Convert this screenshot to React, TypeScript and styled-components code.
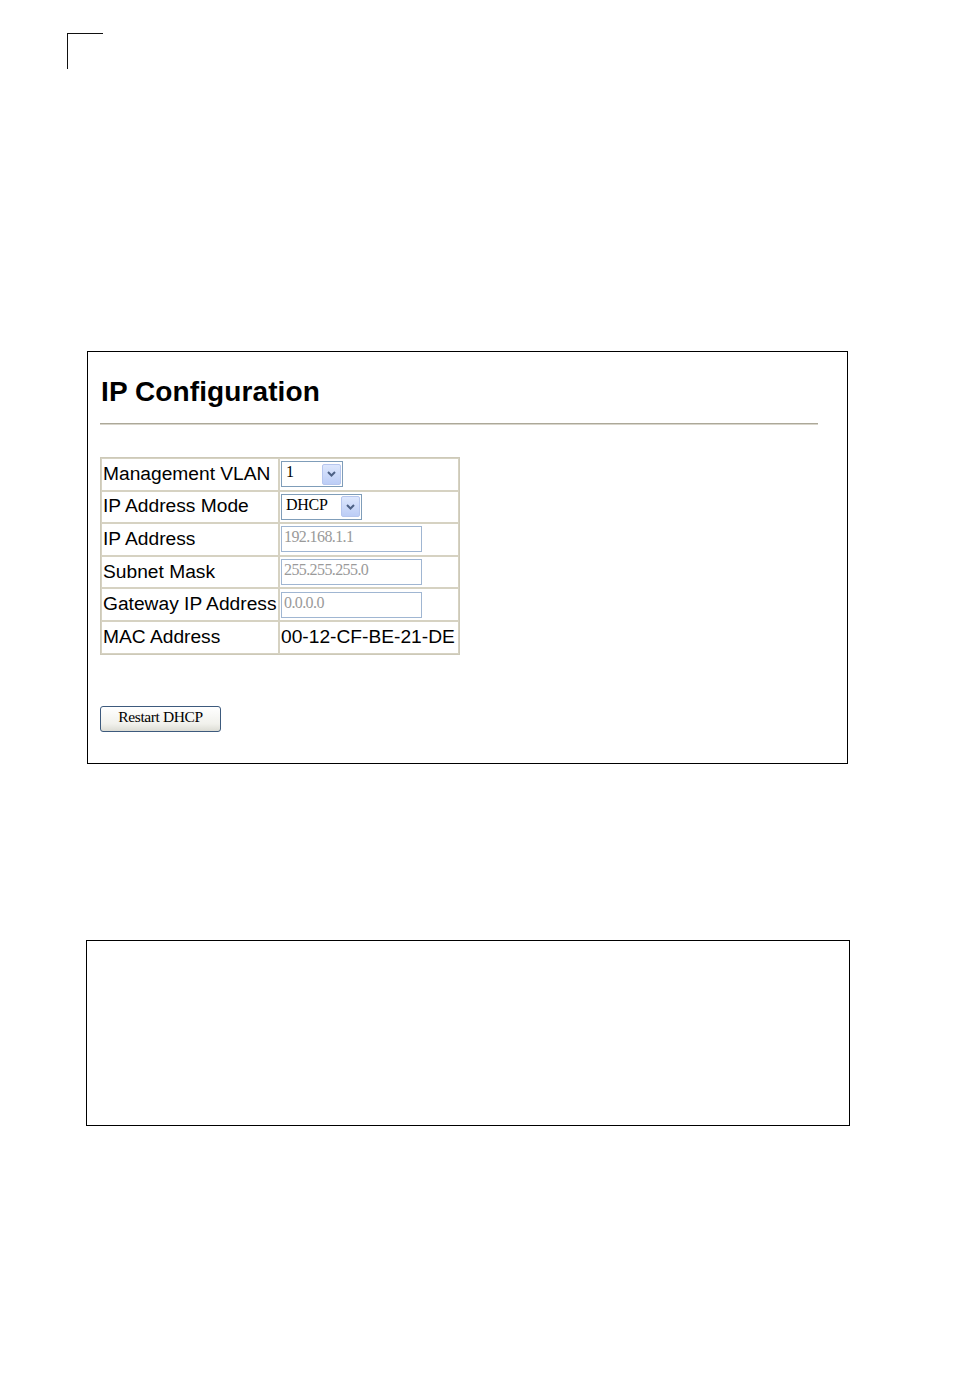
import React from 'react';
import styled, { createGlobalStyle } from 'styled-components';

const GlobalStyle = createGlobalStyle`
  html, body {
    margin: 0;
    padding: 0;
    background: #ffffff;
  }
  body {
    font-family: 'Liberation Sans', Arial, sans-serif;
  }
`;

const Page = styled.div`
  width: 954px;
  min-height: 1388px;
  display: flex;
  flex-direction: column;
  align-items: flex-start;
`;

const CropMark = styled.div`
  margin: 33px 0 0 67px;
  width: 36px;
  height: 36px;
  border-top: 1.5px solid #111;
  border-left: 1.5px solid #111;
  box-sizing: border-box;
`;

const Frame = styled.section<{ $top: number; $left: number; $width: number; $height: number }>`
  box-sizing: border-box;
  margin-top: ${({ $top }) => $top}px;
  margin-left: ${({ $left }) => $left}px;
  width: ${({ $width }) => $width}px;
  min-height: ${({ $height }) => $height}px;
  border: 1px solid #000;
  display: flex;
  flex-direction: column;
  align-items: flex-start;
  padding: 0 12px;
`;

const Title = styled.h1`
  margin: 24px 0 0 1px;
  font-family: 'Liberation Sans', Arial, sans-serif;
  font-size: 28px;
  line-height: 32px;
  font-weight: bold;
  letter-spacing: 0.1px;
  color: #000;
`;

const Rule = styled.div`
  margin-top: 15px;
  width: 718px;
  height: 1px;
  background: #aca899;
  border-bottom: 1px solid #d8d5cb;
`;

const Grid = styled.table`
  margin-top: 32px;
  border: 1px solid #cdc9b8;
  border-collapse: separate;
  border-spacing: 0;
`;

const Label = styled.td`
  box-sizing: border-box;
  width: 178px;
  height: 32.6px;
  padding: 0 1px 1px 1px;
  border: 1px solid #d6d2c2;
  font-size: 19.2px;
  color: #000;
  white-space: nowrap;
  vertical-align: middle;
`;

const Value = styled(Label)`
  width: 180px;
  padding: 0 1px 1px 1px;
`;

const Select = styled.div<{ $width: number }>`
  box-sizing: border-box;
  width: ${({ $width }) => $width}px;
  height: 26px;
  border: 1px solid #7f9db9;
  background: #fff;
  display: flex;
  align-items: center;
  justify-content: space-between;
  padding: 1px;
  margin-top: 1px;
`;

const SelectText = styled.span`
  font-family: 'Liberation Serif', 'Times New Roman', serif;
  font-size: 16px;
  color: #000;
  padding-left: 3px;
  margin-top: -4px;
  letter-spacing: -0.3px;
`;

const Arrow = styled.span`
  box-sizing: border-box;
  width: 19px;
  height: 21px;
  border: 1px solid #b6c6ee;
  border-radius: 2px;
  background: linear-gradient(#dde7fd, #bccdf6);
  display: flex;
  align-items: center;
  justify-content: center;
`;

const Field = styled.div`
  box-sizing: border-box;
  width: 141px;
  height: 26px;
  border: 1px solid #a0b6d2;
  background: #fff;
  font-family: 'Liberation Serif', 'Times New Roman', serif;
  font-size: 16px;
  letter-spacing: -0.6px;
  color: #9a9a9a;
  padding: 0 2px;
  line-height: 19px;
  margin-top: 1px;
`;

const Button = styled.button`
  margin-top: 51px;
  margin-bottom: 31px;
  box-sizing: border-box;
  width: 121px;
  height: 26px;
  border: 1px solid #3d5a7d;
  border-radius: 3px;
  background: linear-gradient(#ffffff, #f1f1ec 70%, #dcdcd4);
  font-family: 'Liberation Serif', 'Times New Roman', serif;
  font-size: 15.5px;
  letter-spacing: -0.4px;
  color: #000;
  padding: 0 0 4px 0;
  cursor: pointer;
`;

const Chevron = () => (
  <svg width="11" height="8" viewBox="0 0 11 8">
    <path d="M2 2 L5.5 5.5 L9 2" fill="none" stroke="#4d6185" strokeWidth="2" />
  </svg>
);

const rows = [
  { label: 'Management VLAN', kind: 'select', value: '1', width: 62 },
  { label: 'IP Address Mode', kind: 'select', value: 'DHCP', width: 81 },
  { label: 'IP Address', kind: 'field', value: '192.168.1.1' },
  { label: 'Subnet Mask', kind: 'field', value: '255.255.255.0' },
  { label: 'Gateway IP Address', kind: 'field', value: '0.0.0.0' },
  { label: 'MAC Address', kind: 'text', value: '00-12-CF-BE-21-DE' },
];

const App = () => {
  return (
    <Page>
      <GlobalStyle />
      <CropMark />
      <Frame $top={282} $left={87} $width={761} $height={413}>
        <Title>IP Configuration</Title>
        <Rule />
        <Grid>
          <tbody>
            {rows.map((row) => (
              <tr key={row.label}>
                <Label>{row.label}</Label>
                <Value>
                  {row.kind === 'select' && (
                    <Select $width={row.width || 62}>
                      <SelectText>{row.value}</SelectText>
                      <Arrow>
                        <Chevron />
                      </Arrow>
                    </Select>
                  )}
                  {row.kind === 'field' && <Field>{row.value}</Field>}
                  {row.kind === 'text' && row.value}
                </Value>
              </tr>
            ))}
          </tbody>
        </Grid>
        <Button type="button">Restart DHCP</Button>
      </Frame>
      <Frame $top={176} $left={86} $width={764} $height={186} />
    </Page>
  );
};

export default App;
